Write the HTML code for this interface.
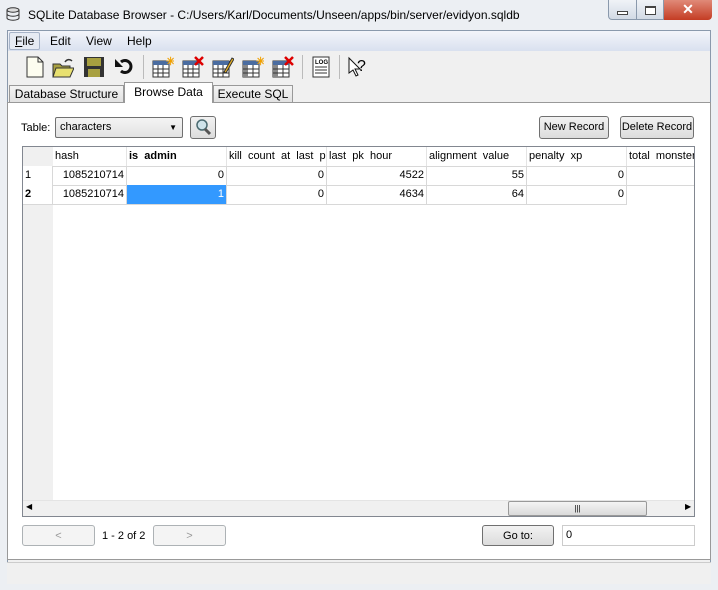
<!DOCTYPE html>
<html><head><style>
*{box-sizing:border-box;margin:0;padding:0}
body{width:718px;height:590px;background:#eceff3;font-family:"Liberation Sans",sans-serif;font-size:12px;color:#000;position:relative;overflow:hidden}
.a{position:absolute}
.btn{position:absolute;border:1px solid #707070;border-radius:3px;background:linear-gradient(#f2f2f2,#dcdcdc);text-align:center;font-size:11px;line-height:20px}
.dis{border-color:#adb2b5;background:#f4f4f4;color:#999}
.cell{position:absolute;border-right:1px solid #d8d8d8;border-bottom:1px solid #d8d8d8;font-size:11px;line-height:19px;padding:0 2px;white-space:nowrap;overflow:hidden}
.hd{background:#fff;border-right:1px solid #e4e4e4}
.r{text-align:right}
.ic{position:absolute;top:56px;width:22px;height:22px}
</style></head><body>
<svg class="a" style="left:5px;top:7px" width="16" height="14"><ellipse cx="8" cy="3" rx="6" ry="2.2" fill="#ddd" stroke="#333"/><path d="M2 3v8c0 1.2 2.7 2.2 6 2.2s6-1 6-2.2V3M2 7c0 1.2 2.7 2.2 6 2.2s6-1 6-2.2" fill="none" stroke="#333"/></svg>
<div class="a" style="left:28px;top:8px;font-size:12px">SQLite Database Browser - C:/Users/Karl/Documents/Unseen/apps/bin/server/evidyon.sqldb</div>
<div class="a" style="left:608px;top:0;width:56px;height:20px;border:1px solid #8a99ac;border-top:0;border-radius:0 0 0 4px;background:linear-gradient(#f0f3f7,#d2dae5)"></div>
<div class="a" style="left:636px;top:0;width:1px;height:20px;background:#8a99ac"></div>
<div class="a" style="left:617px;top:11px;width:11px;height:4px;border:1px solid #444;background:#fff"></div>
<div class="a" style="left:645px;top:6px;width:11px;height:9px;border:1px solid #444;border-top-width:2px;background:#fff"></div>
<div class="a" style="left:664px;top:0;width:48px;height:20px;background:linear-gradient(#e08a78,#c43c24);border-radius:0 0 4px 0;color:#fff;font-weight:bold;text-align:center;font-size:14px;line-height:19px">✕</div>
<div class="a" style="left:7px;top:30px;width:704px;height:554px;background:#f0f0f0;border:1px solid #8a99ac"></div>
<div class="a" style="left:8px;top:31px;width:702px;height:20px;background:linear-gradient(#f3f5fa,#d9e1ef)"></div>
<div class="a" style="left:9px;top:32px;width:31px;height:18px;border:1px solid #a7b4c8;border-radius:2px;background:#e6ebf3"></div>
<div class="a" style="left:15px;top:34px;font-size:12px"><u>F</u>ile</div>
<div class="a" style="left:50px;top:34px">Edit</div>
<div class="a" style="left:86px;top:34px">View</div>
<div class="a" style="left:127px;top:34px">Help</div>
<svg class="ic" style="left:24px"><path d="M3 1h11l5 5v15H3z" fill="#fdfdf0" stroke="#333"/><path d="M14 1v5h5" fill="none" stroke="#333"/></svg>
<svg class="ic" style="left:52px"><path d="M1 8h7l2 2h8v11H1z" fill="#a8a040" stroke="#333"/><path d="M4 12h18l-4 9H1z" fill="#e8e070" stroke="#333"/><path d="M13 6c2-3 5-3 7-1" fill="none" stroke="#333" stroke-width="1.5"/></svg>
<svg class="ic" style="left:83px"><rect x="1" y="1" width="20" height="20" fill="#333"/><rect x="4" y="2" width="14" height="8" fill="#a8a040"/><rect x="5" y="13" width="12" height="8" fill="#a8a040"/></svg>
<svg class="ic" style="left:113px"><path d="M5 6a6 6 0 1 1 0 9" fill="none" stroke="#111" stroke-width="3" transform="translate(3 0)"/><path d="M2 3v8h8z" fill="#111"/></svg>
<div class="a" style="left:143px;top:55px;width:1px;height:24px;background:#bbb"></div>
<svg class="ic" style="left:152px"><rect x="1" y="5" width="16" height="16" fill="#fff" stroke="#333"/><rect x="1" y="5" width="16" height="4" fill="#4a6ca0"/><path d="M6 9v12M11 9v12M1 13h16M1 17h16" stroke="#333"/><text x="14" y="9" fill="#f0a000" font-size="11" font-weight="bold">✳</text></svg>
<svg class="ic" style="left:182px"><rect x="1" y="5" width="16" height="16" fill="#fff" stroke="#333"/><rect x="1" y="5" width="16" height="4" fill="#4a6ca0"/><path d="M6 9v12M11 9v12M1 13h16M1 17h16" stroke="#333"/><path d="M13 1l8 8M21 1l-8 8" stroke="#d00" stroke-width="2.5"/></svg>
<svg class="ic" style="left:212px"><rect x="1" y="5" width="16" height="16" fill="#fff" stroke="#333"/><rect x="1" y="5" width="16" height="4" fill="#4a6ca0"/><path d="M6 9v12M11 9v12M1 13h16M1 17h16" stroke="#333"/><path d="M12 16l8-14 2 1-8 14z" fill="#e8b020" stroke="#333"/></svg>
<svg class="ic" style="left:242px"><rect x="1" y="5" width="16" height="16" fill="#fff" stroke="#333"/><rect x="1" y="5" width="16" height="4" fill="#4a6ca0"/><rect x="1" y="9" width="5" height="12" fill="#888"/><path d="M11 9v12M1 13h16M1 17h16" stroke="#333"/><text x="14" y="9" fill="#f0a000" font-size="11" font-weight="bold">✳</text></svg>
<svg class="ic" style="left:272px"><rect x="1" y="5" width="16" height="16" fill="#fff" stroke="#333"/><rect x="1" y="5" width="16" height="4" fill="#4a6ca0"/><rect x="1" y="9" width="5" height="12" fill="#888"/><path d="M11 9v12M1 13h16M1 17h16" stroke="#333"/><path d="M13 1l8 8M21 1l-8 8" stroke="#d00" stroke-width="2.5"/></svg>
<div class="a" style="left:302px;top:55px;width:1px;height:24px;background:#bbb"></div>
<svg class="ic" style="left:310px"><rect x="3" y="1" width="16" height="20" fill="#fff" stroke="#333"/><text x="5" y="8" font-size="6" font-weight="bold">LOG</text><path d="M5 11h12M5 14h12M5 17h12" stroke="#333"/></svg>
<div class="a" style="left:339px;top:55px;width:1px;height:24px;background:#bbb"></div>
<svg class="ic" style="left:346px"><path d="M3 2v15l4-3 3 6 2-1-3-6h5z" fill="#fff" stroke="#111"/><text x="11" y="15" font-size="16">?</text></svg>
<div class="a" style="left:9px;top:85px;width:115px;height:18px;border:1px solid #999;border-bottom:0;background:linear-gradient(#f4f4f4,#e0e0e0);text-align:center;line-height:17px">Database Structure</div>
<div class="a" style="left:213px;top:85px;width:80px;height:18px;border:1px solid #999;border-bottom:0;background:linear-gradient(#f4f4f4,#e0e0e0);text-align:center;line-height:17px">Execute SQL</div>
<div class="a" style="left:7px;top:102px;width:704px;height:458px;background:#fff;border:1px solid #999"></div>
<div class="a" style="left:124px;top:82px;width:89px;height:21px;border:1px solid #999;border-bottom:0;background:#fff;text-align:center;line-height:19px">Browse Data</div>
<div class="a" style="left:21px;top:122px;font-size:11px">Table:</div>
<div class="a" style="left:55px;top:117px;width:128px;height:21px;border:1px solid #707070;border-radius:2px;background:linear-gradient(#f4f4f4,#e2e2e2);font-size:11px;line-height:19px;padding-left:4px">characters<span style="position:absolute;right:5px;font-size:8px">▼</span></div>
<div class="btn" style="left:190px;top:116px;width:26px;height:23px"></div>
<svg class="a" style="left:194px;top:118px" width="18" height="18"><circle cx="8" cy="7" r="5" fill="#cfe3ea" stroke="#4a6a70" stroke-width="1.5"/><path d="M11 11l5 5" stroke="#555" stroke-width="3"/></svg>
<div class="btn" style="left:539px;top:116px;width:70px;height:23px">New Record</div>
<div class="btn" style="left:620px;top:116px;width:74px;height:23px">Delete Record</div>
<div class="a" style="left:22px;top:146px;width:673px;height:371px;border:1px solid #828790;background:#fff;overflow:hidden">
<div class="a" style="left:0;top:0;width:30px;height:370px;background:#f0f0f0"></div>
<div class="cell hd" style="left:30px;top:0;width:74px">hash</div>
<div class="cell hd" style="left:104px;top:0;width:100px;font-weight:bold">is&nbsp; admin</div>
<div class="cell hd" style="left:204px;top:0;width:100px">kill&nbsp; count&nbsp; at&nbsp; last&nbsp; pk</div>
<div class="cell hd" style="left:304px;top:0;width:100px">last&nbsp; pk&nbsp; hour</div>
<div class="cell hd" style="left:404px;top:0;width:100px">alignment&nbsp; value</div>
<div class="cell hd" style="left:504px;top:0;width:100px">penalty&nbsp; xp</div>
<div class="cell hd" style="left:604px;top:0;width:80px">total&nbsp; monsters</div>
<div class="cell" style="left:0;top:19px;width:30px;background:#fff">1</div>
<div class="cell r" style="left:30px;top:19px;width:74px">1085210714</div>
<div class="cell r" style="left:104px;top:19px;width:100px">0</div>
<div class="cell r" style="left:204px;top:19px;width:100px">0</div>
<div class="cell r" style="left:304px;top:19px;width:100px">4522</div>
<div class="cell r" style="left:404px;top:19px;width:100px">55</div>
<div class="cell r" style="left:504px;top:19px;width:100px">0</div>
<div class="cell r" style="left:604px;top:19px;width:80px"></div>
<div class="cell" style="left:0;top:38px;width:30px;background:#fff;font-weight:bold">2</div>
<div class="cell r" style="left:30px;top:38px;width:74px">1085210714</div>
<div class="cell r" style="left:104px;top:38px;width:100px;background:#3399ff;color:#fff">1</div>
<div class="cell r" style="left:204px;top:38px;width:100px">0</div>
<div class="cell r" style="left:304px;top:38px;width:100px">4634</div>
<div class="cell r" style="left:404px;top:38px;width:100px">64</div>
<div class="cell r" style="left:504px;top:38px;width:100px">0</div>
<div class="cell r" style="left:604px;top:38px;width:80px"></div>
<div class="a" style="left:0;top:353px;width:671px;height:17px;background:#f0f0f0;border-top:1px solid #e4e4e4"></div>
<div class="a" style="left:3px;top:355px;font-size:8px">◀</div>
<div class="a" style="left:662px;top:355px;font-size:8px">▶</div>
<div class="a" style="left:485px;top:354px;width:139px;height:15px;border:1px solid #999;border-radius:2px;background:linear-gradient(#f4f4f4,#dadada);text-align:center;font-size:8px;line-height:13px">|||</div>
</div>
<div class="btn dis" style="left:22px;top:525px;width:73px;height:21px">&lt;</div>
<div class="a" style="left:102px;top:530px;font-size:11px">1 - 2 of 2</div>
<div class="btn dis" style="left:153px;top:525px;width:73px;height:21px">&gt;</div>
<div class="btn" style="left:482px;top:525px;width:72px;height:21px">Go to:</div>
<div class="a" style="left:562px;top:525px;width:133px;height:21px;border:1px solid #ccc;background:#fff;font-size:11px;line-height:19px;padding-left:3px">0</div>
<div class="a" style="left:7px;top:562px;width:704px;height:22px;background:#f0f0f0;border-top:1px solid #ccc"></div>
</body></html>
